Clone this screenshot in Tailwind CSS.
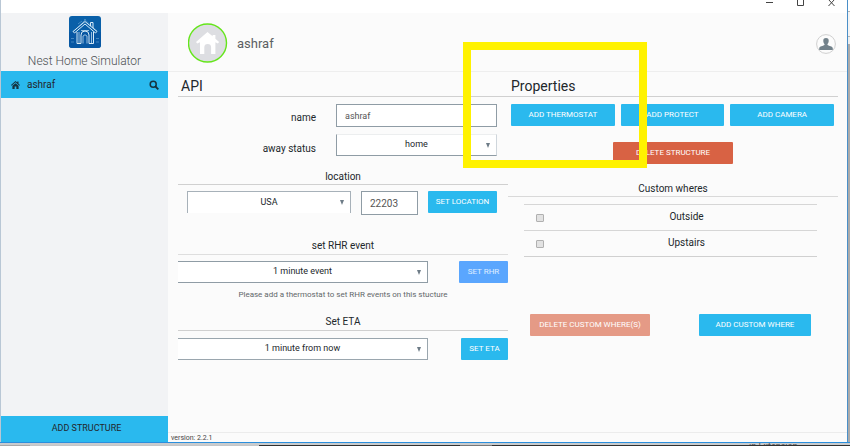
<!DOCTYPE html>
<html lang="en">
<head>
<meta charset="utf-8">
<title>Nest Home Simulator</title>
<script src="https://cdn.jsdelivr.net/npm/@tailwindcss/browser@4"></script>
</head>
<body class="relative flex h-screen flex-col overflow-hidden bg-[#fbfbfb] font-[Roboto,'Liberation_Sans',sans-serif] text-[#22272b]">
<div class="flex min-h-0 grow">
  <div class="w-px shrink-0 bg-[#b9c7d5]"></div>
  <div class="flex min-w-0 grow flex-col">
    <div class="flex h-[13px] shrink-0 justify-end bg-white pr-3">
      <div class="flex gap-6 text-[#444]">
        <button aria-label="Minimize" class="h-2 w-[7px]"><svg viewBox="0 0 7 8" class="h-2 w-[7px]" stroke="currentColor" fill="none"><path d="M0 2.5h7"/></svg></button>
        <button aria-label="Maximize" class="h-2 w-[7px]"><svg viewBox="0 0 7 8" class="h-2 w-[7px]" stroke="currentColor" fill="none"><path d="M.5 0v5.5h6V0"/></svg></button>
        <button aria-label="Close" class="h-2 w-[7px]"><svg viewBox="0 0 7 8" class="h-2 w-[7px]" stroke="currentColor" fill="none"><path d="M.5 6l6-6.500M.5 -.5l6 6.500"/></svg></button>
      </div>
    </div>
    <div class="flex min-h-0 grow">
      <aside class="flex w-[167px] shrink-0 flex-col bg-[#f2f3f5]">
        <div class="flex h-[58px] flex-col items-center pt-[3px]">
          <svg viewBox="0 0 32 32" class="size-8 shrink-0" aria-hidden="true">
            <rect width="32" height="32" rx="3" fill="#0960a9"/>
            <path d="M0 16h32v13a3 3 0 0 1-3 3H3a3 3 0 0 1-3-3z" fill="#0757a3"/>
            <g fill="none" stroke="#5d9ccd" stroke-width=".7"><path d="M2 22.500h3M27 22.500h3M2 26h3M27 26h3M9 8l4-3M15 3l13 12M17 3 4 16"/></g>
            <g fill="none" stroke="#d7ebf8" stroke-width="1"><path d="M4 15.500 16 5.500l12 10-1.500 1.500L16 8 5.500 17zM21.500 10V6.500h2.500V12M8 16v11.500h4V19a4 4 0 0 1 8 0v8.500h4.500V16"/><path d="M14 27.500V20q2-2.500 4 0v7.500M10 16v11M22.500 16v11M12 14.500h8" stroke-width=".7"/></g>
          </svg>
          <div class="mt-[5px] text-[12px] leading-4 font-light whitespace-nowrap text-[#4c5053]">Nest Home Simulator</div>
        </div>
        <div class="flex h-[27px] items-center bg-[#2ab9ee] pr-[9px] pl-[10px]">
          <svg viewBox="0 0 18 16" class="h-2 w-[9px]" fill="#15333f" aria-hidden="true"><path d="M9 0 0 8l1.200 1.300L9 2.600l7.800 6.700L18 8l-3-2.700V1h-2.500v2z"/><path d="M9 4.300 2.800 9.600V16h4.500v-5h3.400v5h4.500V9.600z"/></svg>
          <a href="#" class="ml-[7px] grow text-[10px] leading-4">ashraf</a>
          <button aria-label="Search"><svg viewBox="0 0 10 10" class="size-[10px]" fill="none" stroke="#15333f" stroke-width="1.500"><circle cx="4.200" cy="4.200" r="3"/><path d="M6.500 6.500 9.300 9.300" stroke-width="1.800"/></svg></button>
        </div>
        <div class="grow"></div>
        <button class="h-[26px] bg-[#2ab9ee] pl-1 text-[9px]">ADD STRUCTURE</button>
      </aside>
      <div class="flex min-w-0 grow flex-col">
        <header class="flex h-[59px] shrink-0 items-center border-b border-[#eeeeee] pr-[11px] pl-5">
          <svg viewBox="0 0 40 40" class="mt-[2px] size-10" aria-hidden="true"><circle cx="19.500" cy="20" r="19" fill="#dddee2" stroke="#65e51c" stroke-width="1.400"/><path d="M19.500 9 8 19l1.200 1.400 2.800-1.200V31h4.300v-6.500a3.400 3.400 0 0 1 6.800 0V31h4.300V19.200l2.500 1.200 1.200-1.400-3.700-3.300V12h-2.800v1.200z" fill="#fff"/></svg>
          <h1 class="ml-[9px] grow pt-1 text-[13px] leading-5 text-[#5b5f62]">ashraf</h1>
          <button aria-label="Account" class="mt-1"><svg viewBox="0 0 20 20" class="size-5"><circle cx="10" cy="10" r="9.400" fill="#fcfcfc" stroke="#cfcfcf"/><path d="M10 4c-2 0-2.900 1.300-2.700 3 .1 1.500.5 2.400 1.200 3v1c-1.600 1-5 1.100-5.300 3.200V16h13.600v-1.800c-.3-2.100-3.700-2.200-5.300-3.200v-1c.7-.6 1.100-1.500 1.200-3 .2-1.700-.7-3-2.700-3z" fill="#73828b"/></svg></button>
        </header>
        <main class="grid min-h-0 grow grid-cols-2 content-start px-[10px] pr-[9px]">
          <section class="min-w-0">
            <h2 class="h-[25px] border-b border-[#d0d0d0] pt-1 pl-[3px] text-[14px] leading-5">API</h2>
            <div class="flex flex-col gap-[7px] pt-[7px] pr-[11px]">
              <div class="flex h-[23px] items-center gap-5">
                <label for="name" class="grow pt-1 text-right text-[10px]">name</label>
                <input id="name" value="ashraf" class="h-[23px] w-[161px] border border-[#8f9ca5] bg-white px-2 text-[9px] text-[#555]">
              </div>
              <div class="flex h-[22px] items-center gap-5">
                <label for="away" class="grow pt-[6px] text-right text-[10px]">away status</label>
                <div class="relative w-[161px]">
                  <select id="away" class="block h-[22px] w-full appearance-none border border-t-[#eceeef] border-r-[#cfd6dc] border-b-[#8f9ca5] border-l-[#8f9ca5] bg-white text-[9px] [text-align-last:center]"><option>home</option><option>away</option></select>
                  <svg viewBox="0 0 4 5" class="pointer-events-none absolute top-[9px] right-[7px] h-[5px] w-1" fill="#6e7c87"><path d="M0 0h4L2 5z"/></svg>
                </div>
              </div>
            </div>
            <h3 class="mt-[13px] h-4 border-b border-[#d0d0d0] text-center text-[10px] leading-4">location</h3>
            <div class="flex items-start gap-[10px] pt-[6px] pr-[11px] pl-[9px]">
              <div class="relative min-w-0 grow">
                <select aria-label="Country" class="block h-[22px] w-full appearance-none border-x border-t border-[#a7b1b9] bg-white text-[9px] [text-align-last:center]"><option>USA</option></select>
                <svg viewBox="0 0 4 5" class="pointer-events-none absolute top-[9px] right-[7px] h-[5px] w-1" fill="#6e7c87"><path d="M0 0h4L2 5z"/></svg>
              </div>
              <input aria-label="Zip code" value="22203" class="h-6 w-[57px] shrink-0 border border-[#8f9ca5] bg-white px-2 text-[10px] text-[#555]">
              <button class="h-[22px] w-[69px] shrink-0 rounded-[1px] bg-[#2ab9ee] text-[8px] text-white">SET LOCATION</button>
            </div>
            <h3 class="mt-[22px] h-[18px] border-b border-[#dedede] text-center text-[10px] leading-[18px]">set RHR event</h3>
            <div class="flex items-center justify-between pt-[6px]">
              <div class="relative w-[250px]">
                <select aria-label="RHR event" class="block h-[22px] w-full appearance-none border-y border-r border-[#8f9ca5] bg-white text-[9px] [text-align-last:center]"><option>1 minute event</option></select>
                <svg viewBox="0 0 4 5" class="pointer-events-none absolute top-[9px] right-[7px] h-[5px] w-1" fill="#6e7c87"><path d="M0 0h4L2 5z"/></svg>
              </div>
              <button class="h-[22px] w-[49px] rounded-[1px] bg-[#5aa6fe] text-[8px] text-white/80">SET RHR</button>
            </div>
            <p class="mt-1 text-center text-[8px] leading-4 text-[#62676a]">Please add a thermostat to set RHR events on this stucture</p>
            <h3 class="mt-[10px] h-[18px] border-b border-[#d0d0d0] text-center text-[10px] leading-[18px]">Set ETA</h3>
            <div class="flex items-center justify-between pt-[7px]">
              <div class="relative w-[250px]">
                <select aria-label="ETA" class="block h-[22px] w-full appearance-none border-y border-r border-[#9aa6ae] bg-white text-[9px] [text-align-last:center]"><option>1 minute from now</option></select>
                <svg viewBox="0 0 4 5" class="pointer-events-none absolute top-[9px] right-[7px] h-[5px] w-1" fill="#6e7c87"><path d="M0 0h4L2 5z"/></svg>
              </div>
              <button class="h-[22px] w-[47px] rounded-[1px] bg-[#2ab9ee] text-[8px] text-white">SET ETA</button>
            </div>
          </section>
          <section class="min-w-0">
            <h2 class="h-[25px] border-b border-[#d0d0d0] pt-1 pl-[3px] text-[14px] leading-5">Properties</h2>
            <div class="grid grid-cols-3 gap-[6px] pt-[7px] pr-1 pl-[3px]">
              <button class="h-[22px] rounded-[1px] bg-[#2ab9ee] text-[8px] text-white">ADD THERMOSTAT</button>
              <button class="h-[22px] rounded-[1px] bg-[#2ab9ee] text-[8px] text-white">ADD PROTECT</button>
              <button class="h-[22px] rounded-[1px] bg-[#2ab9ee] text-[8px] text-white">ADD CAMERA</button>
            </div>
            <button class="mx-auto mt-4 block h-[22px] w-[120px] rounded-[1px] bg-[#d86244] text-[8px] text-white">DELETE STRUCTURE</button>
            <h3 class="mt-4 h-[17px] border-b border-[#d9d9d9] text-center text-[10px] leading-[18px]">Custom wheres</h3>
            <div class="pt-[7px] pr-[21px] pl-4">
              <table class="w-full border-collapse text-[10px] leading-4">
                <tbody>
                  <tr class="h-[26px] border-y border-[#d6d6d6]"><td class="w-8 pl-3"><input id="outside" type="checkbox" class="block size-2 appearance-none rounded-[1px] border border-[#b0b0b0] bg-[#e2e2e2]"></td><td class="pb-[2px] text-center"><label for="outside">Outside</label></td></tr>
                  <tr class="h-[26px] border-b border-[#d0d0d0]"><td class="w-8 pl-3"><input id="upstairs" type="checkbox" class="block size-2 appearance-none rounded-[1px] border border-[#b0b0b0] bg-[#e2e2e2]"></td><td class="pb-[2px] text-center"><label for="upstairs">Upstairs</label></td></tr>
                </tbody>
              </table>
            </div>
            <div class="mt-[57px] flex justify-between pr-[27px] pl-[22px]">
              <button class="h-[22px] w-[120px] rounded-[1px] bg-[#e59a86] text-[8px] text-white">DELETE CUSTOM WHERE(S)</button>
              <button class="h-[22px] w-[112px] rounded-[1px] bg-[#2ab9ee] text-[8px] text-white">ADD CUSTOM WHERE</button>
            </div>
          </section>
        </main>
        <footer class="h-[10px] shrink-0 border-t border-[#ececec] pl-[3px] text-[7px] leading-[11px] text-[#444]">version: 2.2.1</footer>
      </div>
    </div>
  </div>
  <div class="w-px shrink-0 bg-[#4a8fc8]"></div>
  <div class="flex w-[2px] shrink-0 flex-col bg-[#ababab]">
    <div class="h-3 border-b border-[#b5b5b5] bg-white"></div>
    <div class="h-[25px] border-b border-[#b5b5b5] bg-[#f4f4f4]"></div>
    <div class="h-[7px] bg-[#eeeeee]"></div>
  </div>
</div>
<div class="h-px shrink-0 bg-[#2b8fdd]"></div>
<div class="h-[2px] shrink-0 overflow-hidden bg-[#c9cbcd] pl-[749px] text-[9px] leading-[6px] text-[#555]"><span>in Extension</span></div>
<div class="flex h-px shrink-0 bg-[#303030]"><div class="w-[30px] bg-[#a8a8a8]"></div><div class="w-[229px] bg-[#c4c6c8]"></div><div class="ml-[201px] w-8 bg-[#777]"></div></div>
<div class="pointer-events-none absolute top-[42px] left-[463px] h-[126px] w-[184px] border-8 border-[#fff200]"></div>
</body>
</html>
